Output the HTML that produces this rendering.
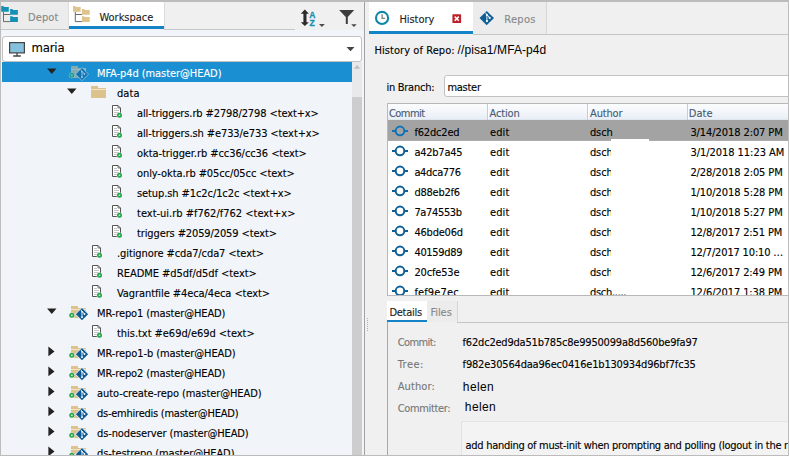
<!DOCTYPE html>
<html><head><meta charset="utf-8"><title>History</title>
<style>
html,body{margin:0;padding:0;}
body{width:789px;height:456px;overflow:hidden;background:#f0f0f0;position:relative;
 font-family:"DejaVu Sans Condensed","DejaVu Sans","Liberation Sans",sans-serif;font-stretch:condensed;font-size:11px;color:#000;}
.a{position:absolute;}
.t{position:absolute;white-space:pre;line-height:20px;height:20px;letter-spacing:-0.2px;-webkit-text-stroke:0.12px;}
svg{position:absolute;overflow:visible;}
</style></head>
<body>
<div class="a" style="left:1px;top:30px;width:363px;height:426px;background:#f1f4f9;"></div>
<div class="a" style="left:1px;top:2px;width:363px;height:28px;background:#f0f0f0;"></div>
<div class="a" style="left:1px;top:2px;width:68px;height:27px;background:#ececec;"></div>
<div class="a" style="left:69px;top:2px;width:95px;height:27px;background:#fff;"></div>
<div class="a" style="left:68px;top:2px;width:1px;height:27px;background:#dedede;"></div>
<div class="a" style="left:164px;top:2px;width:1px;height:27px;background:#dcdcdc;"></div>
<div class="a" style="left:69px;top:26px;width:95px;height:3px;background:#1583c8;"></div>
<div class="a" style="left:1px;top:29px;width:68px;height:1px;background:#c6c6c6;"></div>
<div class="a" style="left:164px;top:29px;width:131px;height:1px;background:#c6c6c6;"></div>
<svg style="left:1px;top:6px" width="19" height="18" viewBox="0 0 19 18"><path d="M2.5 5.7V15.6H9.1M2.5 8.5H9.1" stroke="#6a6a6a" stroke-width="1" fill="none"/><path d="M0.2 0.1h2.5v0.9h5.1v4.7h-7.6z M9.1 3.1h2.6v0.9h5.2v4.8h-7.8z M9.1 10.2h2.6v0.8h5.2v4.9h-7.8z" fill="#1790b5"/></svg>
<div class="t" style="left:28.0px;top:8px;letter-spacing:0.116px;color:#888;">Depot</div>
<svg style="left:72px;top:6px" width="19" height="18" viewBox="0 0 19 18"><g transform="translate(0.8,0)"><path d="M2.5 5.7V15.6H9.1M2.5 8.5H9.1" stroke="#6a6a6a" stroke-width="1" fill="none"/><path d="M0.2 0.1h2.5v0.9h5.1v4.7h-7.6z M9.1 3.1h2.6v0.9h5.2v4.8h-7.8z M9.1 10.2h2.6v0.8h5.2v4.9h-7.8z" fill="#dfc38c"/></g></svg>
<div class="t" style="left:99.4px;top:8px;letter-spacing:-0.004px;color:#222;">Workspace</div>
<svg style="left:300px;top:9px" width="27" height="20" viewBox="0 0 27 20"><path d="M4.85 0.5L0.8 4.7h2.6v8.5H0.8L4.85 17.1L8.9 13.2H6.5v-8.5h2.4z" fill="#2b2b2b"/><path d="M19 15h5.8L21.9 17.9z" fill="#4a4a4a"/></svg>
<div class="t" style="left:309.2px;top:5px;letter-spacing:0.000px;font-family:'Liberation Sans',sans-serif;font-stretch:normal;-webkit-text-stroke:0;font-size:8.5px;font-weight:bold;color:#1790b5;-webkit-text-stroke:0.3px #1790b5;">A</div>
<div class="t" style="left:309.59999999999997px;top:13px;letter-spacing:0.000px;font-family:'Liberation Sans',sans-serif;font-stretch:normal;-webkit-text-stroke:0;font-size:8.5px;font-weight:bold;color:#1790b5;-webkit-text-stroke:0.3px #1790b5;">Z</div>
<svg style="left:339px;top:9px" width="20" height="20" viewBox="0 0 20 20"><g transform="translate(0,0.5)"><path d="M0.1 0.5H15.2L8.8 7.6V14.4H6.8V7.6z" fill="#3e3e3e"/><path d="M12.2 14.8h5.5L14.95 17.5z" fill="#4a4a4a"/></g></svg>
<div class="a" style="left:2px;top:36px;width:360px;height:26px;background:#fff;border:1px solid #c2c2c2;border-radius:3px;box-sizing:border-box;"></div>
<svg style="left:9px;top:42px" width="17" height="16" viewBox="0 0 17 16"><rect x="0.6" y="0.6" width="14.8" height="10.3" fill="#85c0dc" stroke="#444" stroke-width="1.2"/><path d="M8 11v2.6M4.2 14h7.6" stroke="#444" stroke-width="1.3"/></svg>
<div class="t" style="left:31.4px;top:38px;letter-spacing:-0.149px;font-size:13px;color:#000;">maria</div>
<svg style="left:346px;top:47px" width="9" height="6" viewBox="0 0 9 6"><g transform="translate(0.5,0)"><path d="M0 0h8L4 4.2z" fill="#444"/></g></svg>
<div class="a" style="left:352px;top:62px;width:10px;height:394px;background:#e9e9e9;"></div>
<div class="a" style="left:352px;top:97px;width:10px;height:359px;background:#cdcdcd;"></div>
<svg style="left:354px;top:65px" width="8" height="5" viewBox="0 0 8 5"><g transform="translate(0,0.1)"><path d="M0 3.6L3.1 0L6.2 3.6z" fill="#bdbdbd"/></g></svg>
<div class="a" style="left:2px;top:62px;width:350px;height:20px;background:#1a8fd2;"></div>
<svg style="left:47px;top:68px" width="11" height="7" viewBox="0 0 11 7"><g transform="translate(0.1,0.4)"><path d="M0 0h9.4L4.7 5.6z" fill="#222"/></g></svg>
<svg style="left:69px;top:65px;opacity:0.55;" width="20" height="16" viewBox="0 0 20 16"><path d="M2 1h7v2h8v10H2z" fill="#dcc28c"/><rect x="2" y="4" width="15" height="1" fill="#f0e4c8"/><circle cx="2.8" cy="10.3" r="2.9" fill="#f1f4f9"/><circle cx="2.8" cy="10.3" r="2.5" fill="#22a447"/><rect x="1.9" y="9.4" width="1.8" height="1.8" fill="#b5e6c2"/><path d="M13 2.3L19.9 9.2L13 16.1L6.1 9.2z" fill="#f1f4f9"/><path d="M13 3.1L19.1 9.2L13 15.3L6.9 9.2z" fill="#0d5a94"/><path d="M13 6.6v5.6M11.6 4.7l3.9 4.2" stroke="#fff" stroke-width="0.9" fill="none"/><circle cx="13" cy="12.2" r="0.9" fill="#fff"/><circle cx="15.5" cy="9" r="0.9" fill="#fff"/><circle cx="13" cy="6.7" r="0.8" fill="#fff"/></svg>
<div class="t" style="left:97.0px;top:64px;letter-spacing:-0.072px;color:#fff;">MFA-p4d (master@HEAD)</div>
<svg style="left:67px;top:88px" width="11" height="7" viewBox="0 0 11 7"><g transform="translate(0.1,0.4)"><path d="M0 0h9.4L4.7 5.6z" fill="#222"/></g></svg>
<svg style="left:91px;top:86px;" width="16" height="12" viewBox="0 0 16 12"><path d="M0 0h7v2h8v10H0z" fill="#dcc28c"/><rect x="0" y="3" width="15" height="1" fill="#f0e4c8"/></svg>
<div class="t" style="left:117.0px;top:84px;letter-spacing:0.068px;color:#000;">data</div>
<svg style="left:112px;top:105px;" width="12" height="14" viewBox="0 0 12 14"><path d="M0.5 0.5h5.5l2.5 2.5v8.5h-8z" fill="#fff" stroke="#555" stroke-width="1"/><path d="M6 0.5v2.5h2.5" fill="none" stroke="#555" stroke-width="0.8"/><path d="M2 3.5h3M2 5.5h5M2 7.5h5M2 9.5h3" stroke="#aaa" stroke-width="0.7"/><circle cx="7.5" cy="10.3" r="2.9" fill="#f1f4f9"/><circle cx="7.5" cy="10.3" r="2.5" fill="#22a447"/><rect x="6.7" y="9.5" width="1.6" height="1.6" fill="#b5e6c2"/></svg>
<div class="t" style="left:137.0px;top:104px;letter-spacing:-0.112px;color:#000;">all-triggers.rb #2798/2798 &lt;text+x&gt;</div>
<svg style="left:112px;top:125px;" width="12" height="14" viewBox="0 0 12 14"><path d="M0.5 0.5h5.5l2.5 2.5v8.5h-8z" fill="#fff" stroke="#555" stroke-width="1"/><path d="M6 0.5v2.5h2.5" fill="none" stroke="#555" stroke-width="0.8"/><path d="M2 3.5h3M2 5.5h5M2 7.5h5M2 9.5h3" stroke="#aaa" stroke-width="0.7"/><circle cx="7.5" cy="10.3" r="2.9" fill="#f1f4f9"/><circle cx="7.5" cy="10.3" r="2.5" fill="#22a447"/><rect x="6.7" y="9.5" width="1.6" height="1.6" fill="#b5e6c2"/></svg>
<div class="t" style="left:137.0px;top:124px;letter-spacing:-0.103px;color:#000;">all-triggers.sh #e733/e733 &lt;text+x&gt;</div>
<svg style="left:112px;top:145px;" width="12" height="14" viewBox="0 0 12 14"><path d="M0.5 0.5h5.5l2.5 2.5v8.5h-8z" fill="#fff" stroke="#555" stroke-width="1"/><path d="M6 0.5v2.5h2.5" fill="none" stroke="#555" stroke-width="0.8"/><path d="M2 3.5h3M2 5.5h5M2 7.5h5M2 9.5h3" stroke="#aaa" stroke-width="0.7"/><circle cx="7.5" cy="10.3" r="2.9" fill="#f1f4f9"/><circle cx="7.5" cy="10.3" r="2.5" fill="#22a447"/><rect x="6.7" y="9.5" width="1.6" height="1.6" fill="#b5e6c2"/></svg>
<div class="t" style="left:137.0px;top:144px;letter-spacing:-0.071px;color:#000;">okta-trigger.rb #cc36/cc36 &lt;text&gt;</div>
<svg style="left:112px;top:165px;" width="12" height="14" viewBox="0 0 12 14"><path d="M0.5 0.5h5.5l2.5 2.5v8.5h-8z" fill="#fff" stroke="#555" stroke-width="1"/><path d="M6 0.5v2.5h2.5" fill="none" stroke="#555" stroke-width="0.8"/><path d="M2 3.5h3M2 5.5h5M2 7.5h5M2 9.5h3" stroke="#aaa" stroke-width="0.7"/><circle cx="7.5" cy="10.3" r="2.9" fill="#f1f4f9"/><circle cx="7.5" cy="10.3" r="2.5" fill="#22a447"/><rect x="6.7" y="9.5" width="1.6" height="1.6" fill="#b5e6c2"/></svg>
<div class="t" style="left:137.0px;top:164px;letter-spacing:-0.096px;color:#000;">only-okta.rb #05cc/05cc &lt;text&gt;</div>
<svg style="left:112px;top:185px;" width="12" height="14" viewBox="0 0 12 14"><path d="M0.5 0.5h5.5l2.5 2.5v8.5h-8z" fill="#fff" stroke="#555" stroke-width="1"/><path d="M6 0.5v2.5h2.5" fill="none" stroke="#555" stroke-width="0.8"/><path d="M2 3.5h3M2 5.5h5M2 7.5h5M2 9.5h3" stroke="#aaa" stroke-width="0.7"/><circle cx="7.5" cy="10.3" r="2.9" fill="#f1f4f9"/><circle cx="7.5" cy="10.3" r="2.5" fill="#22a447"/><rect x="6.7" y="9.5" width="1.6" height="1.6" fill="#b5e6c2"/></svg>
<div class="t" style="left:137.0px;top:184px;letter-spacing:-0.091px;color:#000;">setup.sh #1c2c/1c2c &lt;text+x&gt;</div>
<svg style="left:112px;top:205px;" width="12" height="14" viewBox="0 0 12 14"><path d="M0.5 0.5h5.5l2.5 2.5v8.5h-8z" fill="#fff" stroke="#555" stroke-width="1"/><path d="M6 0.5v2.5h2.5" fill="none" stroke="#555" stroke-width="0.8"/><path d="M2 3.5h3M2 5.5h5M2 7.5h5M2 9.5h3" stroke="#aaa" stroke-width="0.7"/><circle cx="7.5" cy="10.3" r="2.9" fill="#f1f4f9"/><circle cx="7.5" cy="10.3" r="2.5" fill="#22a447"/><rect x="6.7" y="9.5" width="1.6" height="1.6" fill="#b5e6c2"/></svg>
<div class="t" style="left:137.0px;top:204px;letter-spacing:0.001px;color:#000;">text-ui.rb #f762/f762 &lt;text+x&gt;</div>
<svg style="left:112px;top:225px;" width="12" height="14" viewBox="0 0 12 14"><path d="M0.5 0.5h5.5l2.5 2.5v8.5h-8z" fill="#fff" stroke="#555" stroke-width="1"/><path d="M6 0.5v2.5h2.5" fill="none" stroke="#555" stroke-width="0.8"/><path d="M2 3.5h3M2 5.5h5M2 7.5h5M2 9.5h3" stroke="#aaa" stroke-width="0.7"/><circle cx="7.5" cy="10.3" r="2.9" fill="#f1f4f9"/><circle cx="7.5" cy="10.3" r="2.5" fill="#22a447"/><rect x="6.7" y="9.5" width="1.6" height="1.6" fill="#b5e6c2"/></svg>
<div class="t" style="left:137.0px;top:224px;letter-spacing:-0.118px;color:#000;">triggers #2059/2059 &lt;text&gt;</div>
<svg style="left:92px;top:245px;" width="12" height="14" viewBox="0 0 12 14"><path d="M0.5 0.5h5.5l2.5 2.5v8.5h-8z" fill="#fff" stroke="#555" stroke-width="1"/><path d="M6 0.5v2.5h2.5" fill="none" stroke="#555" stroke-width="0.8"/><path d="M2 3.5h3M2 5.5h5M2 7.5h5M2 9.5h3" stroke="#aaa" stroke-width="0.7"/><circle cx="7.5" cy="10.3" r="2.9" fill="#f1f4f9"/><circle cx="7.5" cy="10.3" r="2.5" fill="#22a447"/><rect x="6.7" y="9.5" width="1.6" height="1.6" fill="#b5e6c2"/></svg>
<div class="t" style="left:117.0px;top:244px;letter-spacing:-0.093px;color:#000;">.gitignore #cda7/cda7 &lt;text&gt;</div>
<svg style="left:92px;top:265px;" width="12" height="14" viewBox="0 0 12 14"><path d="M0.5 0.5h5.5l2.5 2.5v8.5h-8z" fill="#fff" stroke="#555" stroke-width="1"/><path d="M6 0.5v2.5h2.5" fill="none" stroke="#555" stroke-width="0.8"/><path d="M2 3.5h3M2 5.5h5M2 7.5h5M2 9.5h3" stroke="#aaa" stroke-width="0.7"/><circle cx="7.5" cy="10.3" r="2.9" fill="#f1f4f9"/><circle cx="7.5" cy="10.3" r="2.5" fill="#22a447"/><rect x="6.7" y="9.5" width="1.6" height="1.6" fill="#b5e6c2"/></svg>
<div class="t" style="left:117.0px;top:264px;letter-spacing:-0.049px;color:#000;">README #d5df/d5df &lt;text&gt;</div>
<svg style="left:92px;top:285px;" width="12" height="14" viewBox="0 0 12 14"><path d="M0.5 0.5h5.5l2.5 2.5v8.5h-8z" fill="#fff" stroke="#555" stroke-width="1"/><path d="M6 0.5v2.5h2.5" fill="none" stroke="#555" stroke-width="0.8"/><path d="M2 3.5h3M2 5.5h5M2 7.5h5M2 9.5h3" stroke="#aaa" stroke-width="0.7"/><circle cx="7.5" cy="10.3" r="2.9" fill="#f1f4f9"/><circle cx="7.5" cy="10.3" r="2.5" fill="#22a447"/><rect x="6.7" y="9.5" width="1.6" height="1.6" fill="#b5e6c2"/></svg>
<div class="t" style="left:117.0px;top:284px;letter-spacing:-0.083px;color:#000;">Vagrantfile #4eca/4eca &lt;text&gt;</div>
<svg style="left:47px;top:308px" width="11" height="7" viewBox="0 0 11 7"><g transform="translate(0.1,0.4)"><path d="M0 0h9.4L4.7 5.6z" fill="#222"/></g></svg>
<svg style="left:69px;top:305px;" width="20" height="16" viewBox="0 0 20 16"><path d="M2 1h7v2h8v10H2z" fill="#dcc28c"/><rect x="2" y="4" width="15" height="1" fill="#f0e4c8"/><circle cx="2.8" cy="10.3" r="2.9" fill="#f1f4f9"/><circle cx="2.8" cy="10.3" r="2.5" fill="#22a447"/><rect x="1.9" y="9.4" width="1.8" height="1.8" fill="#b5e6c2"/><path d="M13 2.3L19.9 9.2L13 16.1L6.1 9.2z" fill="#f1f4f9"/><path d="M13 3.1L19.1 9.2L13 15.3L6.9 9.2z" fill="#0d5a94"/><path d="M13 6.6v5.6M11.6 4.7l3.9 4.2" stroke="#fff" stroke-width="0.9" fill="none"/><circle cx="13" cy="12.2" r="0.9" fill="#fff"/><circle cx="15.5" cy="9" r="0.9" fill="#fff"/><circle cx="13" cy="6.7" r="0.8" fill="#fff"/></svg>
<div class="t" style="left:97.0px;top:304px;letter-spacing:-0.112px;color:#000;">MR-repo1 (master@HEAD)</div>
<svg style="left:92px;top:325px;" width="12" height="14" viewBox="0 0 12 14"><path d="M0.5 0.5h5.5l2.5 2.5v8.5h-8z" fill="#fff" stroke="#555" stroke-width="1"/><path d="M6 0.5v2.5h2.5" fill="none" stroke="#555" stroke-width="0.8"/><path d="M2 3.5h3M2 5.5h5M2 7.5h5M2 9.5h3" stroke="#aaa" stroke-width="0.7"/><circle cx="7.5" cy="10.3" r="2.9" fill="#f1f4f9"/><circle cx="7.5" cy="10.3" r="2.5" fill="#22a447"/><rect x="6.7" y="9.5" width="1.6" height="1.6" fill="#b5e6c2"/></svg>
<div class="t" style="left:117.0px;top:324px;letter-spacing:-0.042px;color:#000;">this.txt #e69d/e69d &lt;text&gt;</div>
<svg style="left:48px;top:346px" width="8" height="11" viewBox="0 0 8 11"><g transform="translate(0.4,0.6)"><path d="M0 0v9.6L6.1 4.8z" fill="#222"/></g></svg>
<svg style="left:69px;top:345px;" width="20" height="16" viewBox="0 0 20 16"><path d="M2 1h7v2h8v10H2z" fill="#dcc28c"/><rect x="2" y="4" width="15" height="1" fill="#f0e4c8"/><circle cx="2.8" cy="10.3" r="2.9" fill="#f1f4f9"/><circle cx="2.8" cy="10.3" r="2.5" fill="#22a447"/><rect x="1.9" y="9.4" width="1.8" height="1.8" fill="#b5e6c2"/><path d="M13 2.3L19.9 9.2L13 16.1L6.1 9.2z" fill="#f1f4f9"/><path d="M13 3.1L19.1 9.2L13 15.3L6.9 9.2z" fill="#0d5a94"/><path d="M13 6.6v5.6M11.6 4.7l3.9 4.2" stroke="#fff" stroke-width="0.9" fill="none"/><circle cx="13" cy="12.2" r="0.9" fill="#fff"/><circle cx="15.5" cy="9" r="0.9" fill="#fff"/><circle cx="13" cy="6.7" r="0.8" fill="#fff"/></svg>
<div class="t" style="left:97.0px;top:344px;letter-spacing:-0.087px;color:#000;">MR-repo1-b (master@HEAD)</div>
<svg style="left:48px;top:366px" width="8" height="11" viewBox="0 0 8 11"><g transform="translate(0.4,0.6)"><path d="M0 0v9.6L6.1 4.8z" fill="#222"/></g></svg>
<svg style="left:69px;top:365px;" width="20" height="16" viewBox="0 0 20 16"><path d="M2 1h7v2h8v10H2z" fill="#dcc28c"/><rect x="2" y="4" width="15" height="1" fill="#f0e4c8"/><circle cx="2.8" cy="10.3" r="2.9" fill="#f1f4f9"/><circle cx="2.8" cy="10.3" r="2.5" fill="#22a447"/><rect x="1.9" y="9.4" width="1.8" height="1.8" fill="#b5e6c2"/><path d="M13 2.3L19.9 9.2L13 16.1L6.1 9.2z" fill="#f1f4f9"/><path d="M13 3.1L19.1 9.2L13 15.3L6.9 9.2z" fill="#0d5a94"/><path d="M13 6.6v5.6M11.6 4.7l3.9 4.2" stroke="#fff" stroke-width="0.9" fill="none"/><circle cx="13" cy="12.2" r="0.9" fill="#fff"/><circle cx="15.5" cy="9" r="0.9" fill="#fff"/><circle cx="13" cy="6.7" r="0.8" fill="#fff"/></svg>
<div class="t" style="left:97.0px;top:364px;letter-spacing:-0.112px;color:#000;">MR-repo2 (master@HEAD)</div>
<svg style="left:48px;top:386px" width="8" height="11" viewBox="0 0 8 11"><g transform="translate(0.4,0.6)"><path d="M0 0v9.6L6.1 4.8z" fill="#222"/></g></svg>
<svg style="left:69px;top:385px;" width="20" height="16" viewBox="0 0 20 16"><path d="M2 1h7v2h8v10H2z" fill="#dcc28c"/><rect x="2" y="4" width="15" height="1" fill="#f0e4c8"/><circle cx="2.8" cy="10.3" r="2.9" fill="#f1f4f9"/><circle cx="2.8" cy="10.3" r="2.5" fill="#22a447"/><rect x="1.9" y="9.4" width="1.8" height="1.8" fill="#b5e6c2"/><path d="M13 2.3L19.9 9.2L13 16.1L6.1 9.2z" fill="#f1f4f9"/><path d="M13 3.1L19.1 9.2L13 15.3L6.9 9.2z" fill="#0d5a94"/><path d="M13 6.6v5.6M11.6 4.7l3.9 4.2" stroke="#fff" stroke-width="0.9" fill="none"/><circle cx="13" cy="12.2" r="0.9" fill="#fff"/><circle cx="15.5" cy="9" r="0.9" fill="#fff"/><circle cx="13" cy="6.7" r="0.8" fill="#fff"/></svg>
<div class="t" style="left:97.0px;top:384px;letter-spacing:-0.083px;color:#000;">auto-create-repo (master@HEAD)</div>
<svg style="left:48px;top:406px" width="8" height="11" viewBox="0 0 8 11"><g transform="translate(0.4,0.6)"><path d="M0 0v9.6L6.1 4.8z" fill="#222"/></g></svg>
<svg style="left:69px;top:405px;" width="20" height="16" viewBox="0 0 20 16"><path d="M2 1h7v2h8v10H2z" fill="#dcc28c"/><rect x="2" y="4" width="15" height="1" fill="#f0e4c8"/><circle cx="2.8" cy="10.3" r="2.9" fill="#f1f4f9"/><circle cx="2.8" cy="10.3" r="2.5" fill="#22a447"/><rect x="1.9" y="9.4" width="1.8" height="1.8" fill="#b5e6c2"/><path d="M13 2.3L19.9 9.2L13 16.1L6.1 9.2z" fill="#f1f4f9"/><path d="M13 3.1L19.1 9.2L13 15.3L6.9 9.2z" fill="#0d5a94"/><path d="M13 6.6v5.6M11.6 4.7l3.9 4.2" stroke="#fff" stroke-width="0.9" fill="none"/><circle cx="13" cy="12.2" r="0.9" fill="#fff"/><circle cx="15.5" cy="9" r="0.9" fill="#fff"/><circle cx="13" cy="6.7" r="0.8" fill="#fff"/></svg>
<div class="t" style="left:97.0px;top:404px;letter-spacing:-0.245px;color:#000;">ds-emhiredis (master@HEAD)</div>
<svg style="left:48px;top:426px" width="8" height="11" viewBox="0 0 8 11"><g transform="translate(0.4,0.6)"><path d="M0 0v9.6L6.1 4.8z" fill="#222"/></g></svg>
<svg style="left:69px;top:425px;" width="20" height="16" viewBox="0 0 20 16"><path d="M2 1h7v2h8v10H2z" fill="#dcc28c"/><rect x="2" y="4" width="15" height="1" fill="#f0e4c8"/><circle cx="2.8" cy="10.3" r="2.9" fill="#f1f4f9"/><circle cx="2.8" cy="10.3" r="2.5" fill="#22a447"/><rect x="1.9" y="9.4" width="1.8" height="1.8" fill="#b5e6c2"/><path d="M13 2.3L19.9 9.2L13 16.1L6.1 9.2z" fill="#f1f4f9"/><path d="M13 3.1L19.1 9.2L13 15.3L6.9 9.2z" fill="#0d5a94"/><path d="M13 6.6v5.6M11.6 4.7l3.9 4.2" stroke="#fff" stroke-width="0.9" fill="none"/><circle cx="13" cy="12.2" r="0.9" fill="#fff"/><circle cx="15.5" cy="9" r="0.9" fill="#fff"/><circle cx="13" cy="6.7" r="0.8" fill="#fff"/></svg>
<div class="t" style="left:97.0px;top:424px;letter-spacing:-0.119px;color:#000;">ds-nodeserver (master@HEAD)</div>
<svg style="left:48px;top:446px" width="8" height="11" viewBox="0 0 8 11"><g transform="translate(0.4,0.6)"><path d="M0 0v9.6L6.1 4.8z" fill="#222"/></g></svg>
<svg style="left:69px;top:445px;" width="20" height="16" viewBox="0 0 20 16"><path d="M2 1h7v2h8v10H2z" fill="#dcc28c"/><rect x="2" y="4" width="15" height="1" fill="#f0e4c8"/><circle cx="2.8" cy="10.3" r="2.9" fill="#f1f4f9"/><circle cx="2.8" cy="10.3" r="2.5" fill="#22a447"/><rect x="1.9" y="9.4" width="1.8" height="1.8" fill="#b5e6c2"/><path d="M13 2.3L19.9 9.2L13 16.1L6.1 9.2z" fill="#f1f4f9"/><path d="M13 3.1L19.1 9.2L13 15.3L6.9 9.2z" fill="#0d5a94"/><path d="M13 6.6v5.6M11.6 4.7l3.9 4.2" stroke="#fff" stroke-width="0.9" fill="none"/><circle cx="13" cy="12.2" r="0.9" fill="#fff"/><circle cx="15.5" cy="9" r="0.9" fill="#fff"/><circle cx="13" cy="6.7" r="0.8" fill="#fff"/></svg>
<div class="t" style="left:97.0px;top:444px;letter-spacing:-0.105px;color:#000;">ds-testrepo (master@HEAD)</div>
<div class="a" style="left:364px;top:2px;width:1px;height:454px;background:#a2a2a2;"></div>
<div class="a" style="left:367px;top:318px;width:1px;height:1px;background:#b0b0b0;"></div>
<div class="a" style="left:367px;top:320px;width:1px;height:1px;background:#b0b0b0;"></div>
<div class="a" style="left:367px;top:322px;width:1px;height:1px;background:#b0b0b0;"></div>
<div class="a" style="left:367px;top:324px;width:1px;height:1px;background:#b0b0b0;"></div>
<div class="a" style="left:367px;top:326px;width:1px;height:1px;background:#b0b0b0;"></div>
<div class="a" style="left:367px;top:328px;width:1px;height:1px;background:#b0b0b0;"></div>
<div class="a" style="left:367px;top:330px;width:1px;height:1px;background:#b0b0b0;"></div>
<div class="a" style="left:369px;top:2px;width:104px;height:29px;background:#fff;"></div>
<div class="a" style="left:369px;top:31px;width:104px;height:3px;background:#1583c8;"></div>
<div class="a" style="left:473px;top:2px;width:74px;height:32px;background:#ececec;"></div>
<div class="a" style="left:546px;top:2px;width:1px;height:32px;background:#d6d6d6;"></div>
<div class="a" style="left:473px;top:34px;width:315px;height:1px;background:#c6c6c6;"></div>
<svg style="left:374px;top:10px" width="16" height="16" viewBox="0 0 16 16"><g transform="translate(0.5,0.5)"><circle cx="7.55" cy="7.4" r="6.05" fill="#fff" stroke="#0e86a9" stroke-width="2.1"/><path d="M7.6 3.7v4.1h3" fill="none" stroke="#808080" stroke-width="1.3"/></g></svg>
<div class="t" style="left:399.4px;top:10px;letter-spacing:-0.051px;color:#222;">History</div>
<svg style="left:452px;top:14px" width="10" height="10" viewBox="0 0 10 10"><g transform="translate(0.4,0.3)"><rect width="8.7" height="8.7" rx="0.6" fill="#bf2026"/><path d="M2.3 2.3l4.1 4.1M6.4 2.3l-4.1 4.1" stroke="#fff" stroke-width="1.5"/></g></svg>
<svg style="left:479px;top:10px" width="16" height="16" viewBox="0 0 16 16"><g transform="translate(0.2,0.6)"><path d="M7.5 0.3L14.8 7.5L7.5 14.7L0.3 7.5z" fill="#0f5f97"/><path d="M7.7 4v6.4M6 1.9l4.5 5.3" stroke="#fff" stroke-width="0.9" fill="none"/><circle cx="7.7" cy="10.5" r="1.1" fill="#fff"/><circle cx="10.5" cy="7.3" r="1.1" fill="#fff"/><circle cx="7.7" cy="4.5" r="1" fill="#fff"/></g></svg>
<div class="t" style="left:504.2px;top:10px;letter-spacing:0.333px;color:#888;">Repos</div>
<div class="t" style="left:374.4px;top:41px;letter-spacing:0.075px;color:#000;">History of Repo:</div>
<div class="t" style="left:457.59999999999997px;top:40px;letter-spacing:0.095px;font-family:'Liberation Sans',sans-serif;font-stretch:normal;-webkit-text-stroke:0;font-size:12px;color:#000;">//pisa1/MFA-p4d</div>
<div class="t" style="left:386.4px;top:78px;letter-spacing:-0.258px;color:#000;">in Branch:</div>
<div class="a" style="left:444px;top:75px;width:350px;height:22px;background:#fff;border:1px solid #c2c2c2;border-radius:3px;box-sizing:border-box;"></div>
<div class="t" style="left:447.4px;top:78px;letter-spacing:-0.261px;color:#000;">master</div>
<div class="a" style="left:387px;top:103px;width:402px;height:193px;background:#fff;border:1px solid #b8b8b8;box-sizing:border-box;"></div>
<div class="a" style="left:388px;top:104px;width:400px;height:16px;background:linear-gradient(#fbfcfe,#f3f6fa 50%,#e9eff7 90%,#dde3ea);"></div>
<div class="a" style="left:487px;top:104px;width:1px;height:16px;background:#c8ccd2;"></div>
<div class="a" style="left:488px;top:104px;width:1px;height:15px;background:#fdfeff;"></div>
<div class="a" style="left:587px;top:104px;width:1px;height:16px;background:#c8ccd2;"></div>
<div class="a" style="left:588px;top:104px;width:1px;height:15px;background:#fdfeff;"></div>
<div class="a" style="left:687px;top:104px;width:1px;height:16px;background:#c8ccd2;"></div>
<div class="a" style="left:688px;top:104px;width:1px;height:15px;background:#fdfeff;"></div>
<div class="t" style="left:388.9px;top:104px;letter-spacing:-0.518px;color:#465a72;">Commit</div>
<div class="t" style="left:489.59999999999997px;top:104px;letter-spacing:-0.157px;color:#465a72;">Action</div>
<div class="t" style="left:590.0px;top:104px;letter-spacing:-0.142px;color:#465a72;">Author</div>
<div class="t" style="left:688.6999999999999px;top:104px;letter-spacing:0.115px;color:#465a72;">Date</div>
<div class="a" style="left:388px;top:120px;width:400px;height:20px;background:#a3a3a3;"></div>
<div class="a" style="left:388px;top:140px;width:400px;height:1px;background:#adadad;"></div>
<div class="a" style="left:388px;top:120px;width:400px;height:175px;overflow:hidden;">
<svg style="left:4px;top:5px;" width="16" height="11" viewBox="0 0 16 11"><g transform="translate(0,0.4)"><path d="M0 5.5h3.8M12.2 5.5h3.8" stroke="#1173b7" stroke-width="2" fill="none"/><circle cx="8" cy="5.5" r="4.3" fill="none" stroke="#1173b7" stroke-width="2"/></g></svg>
<div class="t" style="left:26.4px;top:3px;letter-spacing:-0.181px;">f62dc2ed</div>
<div class="t" style="left:102.10000000000001px;top:3px;letter-spacing:0.061px;">edit</div>
<div class="t" style="left:201.9px;top:3px;letter-spacing:-0.052px;">dsch</div>
<div class="t" style="left:302.4px;top:3px;letter-spacing:-0.084px;">3/14/2018 2:07 PM</div>
<svg style="left:4px;top:25px;" width="16" height="11" viewBox="0 0 16 11"><g transform="translate(0,0.4)"><path d="M0 5.5h3.8M12.2 5.5h3.8" stroke="#0f5f95" stroke-width="2" fill="none"/><circle cx="8" cy="5.5" r="4.3" fill="none" stroke="#0f5f95" stroke-width="2"/></g></svg>
<div class="t" style="left:26.4px;top:23px;letter-spacing:-0.242px;">a42b7a45</div>
<div class="t" style="left:102.10000000000001px;top:23px;letter-spacing:0.061px;">edit</div>
<div class="t" style="left:201.9px;top:23px;letter-spacing:-0.052px;">dsch</div>
<div class="t" style="left:302.4px;top:23px;letter-spacing:-0.041px;">3/1/2018 11:23 AM</div>
<svg style="left:4px;top:45px;" width="16" height="11" viewBox="0 0 16 11"><g transform="translate(0,0.4)"><path d="M0 5.5h3.8M12.2 5.5h3.8" stroke="#0f5f95" stroke-width="2" fill="none"/><circle cx="8" cy="5.5" r="4.3" fill="none" stroke="#0f5f95" stroke-width="2"/></g></svg>
<div class="t" style="left:26.4px;top:43px;letter-spacing:-0.335px;">a4dca776</div>
<div class="t" style="left:102.10000000000001px;top:43px;letter-spacing:0.061px;">edit</div>
<div class="t" style="left:201.9px;top:43px;letter-spacing:-0.052px;">dsch</div>
<div class="t" style="left:302.4px;top:43px;letter-spacing:-0.084px;">2/28/2018 2:05 PM</div>
<svg style="left:4px;top:65px;" width="16" height="11" viewBox="0 0 16 11"><g transform="translate(0,0.4)"><path d="M0 5.5h3.8M12.2 5.5h3.8" stroke="#0f5f95" stroke-width="2" fill="none"/><circle cx="8" cy="5.5" r="4.3" fill="none" stroke="#0f5f95" stroke-width="2"/></g></svg>
<div class="t" style="left:26.4px;top:63px;letter-spacing:-0.233px;">d88eb2f6</div>
<div class="t" style="left:102.10000000000001px;top:63px;letter-spacing:0.061px;">edit</div>
<div class="t" style="left:201.9px;top:63px;letter-spacing:-0.052px;">dsch</div>
<div class="t" style="left:302.4px;top:63px;letter-spacing:-0.084px;">1/10/2018 5:28 PM</div>
<svg style="left:4px;top:85px;" width="16" height="11" viewBox="0 0 16 11"><g transform="translate(0,0.4)"><path d="M0 5.5h3.8M12.2 5.5h3.8" stroke="#0f5f95" stroke-width="2" fill="none"/><circle cx="8" cy="5.5" r="4.3" fill="none" stroke="#0f5f95" stroke-width="2"/></g></svg>
<div class="t" style="left:26.4px;top:83px;letter-spacing:-0.346px;">7a74553b</div>
<div class="t" style="left:102.10000000000001px;top:83px;letter-spacing:0.061px;">edit</div>
<div class="t" style="left:201.9px;top:83px;letter-spacing:-0.052px;">dsch</div>
<div class="t" style="left:302.4px;top:83px;letter-spacing:-0.084px;">1/10/2018 5:27 PM</div>
<svg style="left:4px;top:105px;" width="16" height="11" viewBox="0 0 16 11"><g transform="translate(0,0.4)"><path d="M0 5.5h3.8M12.2 5.5h3.8" stroke="#0f5f95" stroke-width="2" fill="none"/><circle cx="8" cy="5.5" r="4.3" fill="none" stroke="#0f5f95" stroke-width="2"/></g></svg>
<div class="t" style="left:26.4px;top:103px;letter-spacing:-0.204px;">46bde06d</div>
<div class="t" style="left:102.10000000000001px;top:103px;letter-spacing:0.061px;">edit</div>
<div class="t" style="left:201.9px;top:103px;letter-spacing:-0.052px;">dsch</div>
<div class="t" style="left:302.4px;top:103px;letter-spacing:-0.109px;">12/8/2017 2:51 PM</div>
<svg style="left:4px;top:125px;" width="16" height="11" viewBox="0 0 16 11"><g transform="translate(0,0.4)"><path d="M0 5.5h3.8M12.2 5.5h3.8" stroke="#0f5f95" stroke-width="2" fill="none"/><circle cx="8" cy="5.5" r="4.3" fill="none" stroke="#0f5f95" stroke-width="2"/></g></svg>
<div class="t" style="left:26.4px;top:123px;letter-spacing:-0.308px;">40159d89</div>
<div class="t" style="left:102.10000000000001px;top:123px;letter-spacing:0.061px;">edit</div>
<div class="t" style="left:201.9px;top:123px;letter-spacing:-0.052px;">dsch</div>
<div class="t" style="left:302.4px;top:123px;letter-spacing:-0.165px;">12/7/2017 10:10 …</div>
<svg style="left:4px;top:145px;" width="16" height="11" viewBox="0 0 16 11"><g transform="translate(0,0.4)"><path d="M0 5.5h3.8M12.2 5.5h3.8" stroke="#0f5f95" stroke-width="2" fill="none"/><circle cx="8" cy="5.5" r="4.3" fill="none" stroke="#0f5f95" stroke-width="2"/></g></svg>
<div class="t" style="left:26.4px;top:143px;letter-spacing:-0.157px;">20cfe53e</div>
<div class="t" style="left:102.10000000000001px;top:143px;letter-spacing:0.061px;">edit</div>
<div class="t" style="left:201.9px;top:143px;letter-spacing:-0.052px;">dsch</div>
<div class="t" style="left:302.4px;top:143px;letter-spacing:-0.109px;">12/6/2017 2:49 PM</div>
<svg style="left:4px;top:165px;" width="16" height="11" viewBox="0 0 16 11"><g transform="translate(0,0.4)"><path d="M0 5.5h3.8M12.2 5.5h3.8" stroke="#0f5f95" stroke-width="2" fill="none"/><circle cx="8" cy="5.5" r="4.3" fill="none" stroke="#0f5f95" stroke-width="2"/></g></svg>
<div class="t" style="left:26.4px;top:163px;letter-spacing:0.133px;">fef9e7ec</div>
<div class="t" style="left:102.10000000000001px;top:163px;letter-spacing:0.061px;">edit</div>
<div class="t" style="left:201.9px;top:163px;letter-spacing:-0.280px;">dsch.....</div>
<div class="t" style="left:302.4px;top:163px;letter-spacing:-0.109px;">12/6/2017 1:38 PM</div>
<div class="a" style="left:223px;top:19px;width:38px;height:151px;background:#fff;"></div>
</div>
<div class="a" style="left:387px;top:301px;width:40px;height:19px;background:#fff;"></div>
<div class="a" style="left:387px;top:320px;width:40px;height:2px;background:#1583c8;"></div>
<div class="a" style="left:427px;top:301px;width:31px;height:21px;background:#ececec;"></div>
<div class="a" style="left:457px;top:301px;width:1px;height:21px;background:#d6d6d6;"></div>
<div class="a" style="left:457px;top:322px;width:331px;height:1px;background:#c6c6c6;"></div>
<div class="a" style="left:387px;top:322px;width:1px;height:133px;background:#a8a8a8;"></div>
<div class="t" style="left:389.4px;top:303px;letter-spacing:-0.252px;color:#222;">Details</div>
<div class="t" style="left:430.4px;top:303px;letter-spacing:-0.060px;color:#888;">Files</div>
<div class="t" style="left:397.7px;top:333px;letter-spacing:-0.586px;color:#777;">Commit:</div>
<div class="t" style="left:397.7px;top:355px;letter-spacing:0.480px;color:#777;">Tree:</div>
<div class="t" style="left:397.7px;top:377px;letter-spacing:0.105px;color:#777;">Author:</div>
<div class="t" style="left:397.7px;top:399px;letter-spacing:-0.351px;color:#777;">Committer:</div>
<div class="t" style="left:462.59999999999997px;top:333px;letter-spacing:-0.202px;">f62dc2ed9da51b785c8e9950099a8d560be9fa97</div>
<div class="t" style="left:462.59999999999997px;top:355px;letter-spacing:-0.188px;">f982e30564daa96ec0416e1b130934d96bf7fc35</div>
<div class="t" style="left:462.79999999999995px;top:377px;letter-spacing:0.406px;font-family:'Liberation Sans',sans-serif;font-stretch:normal;-webkit-text-stroke:0;font-size:12px;">helen</div>
<div class="t" style="left:464.79999999999995px;top:397px;letter-spacing:0.406px;font-family:'Liberation Sans',sans-serif;font-stretch:normal;-webkit-text-stroke:0;font-size:12px;">helen</div>
<div class="a" style="left:461px;top:421px;width:328px;height:35px;background:#f3f3f3;border-left:1px solid #e2e2e2;border-top:1px solid #e4e4e4;box-sizing:border-box;"></div>
<div class="t" style="left:465.5px;top:436px;letter-spacing:-0.279px;">add handing of must-init when prompting and polling (logout in the r</div>
<div class="a" style="left:0px;top:0px;width:789px;height:2px;background:#bcbcbc;"></div>
<div class="a" style="left:0px;top:0px;width:1px;height:456px;background:#bcbcbc;"></div>
<div class="a" style="left:788px;top:0px;width:1px;height:456px;background:#bcbcbc;"></div>
<div class="a" style="left:0px;top:455px;width:789px;height:1px;background:#bcbcbc;"></div>
</body></html>
